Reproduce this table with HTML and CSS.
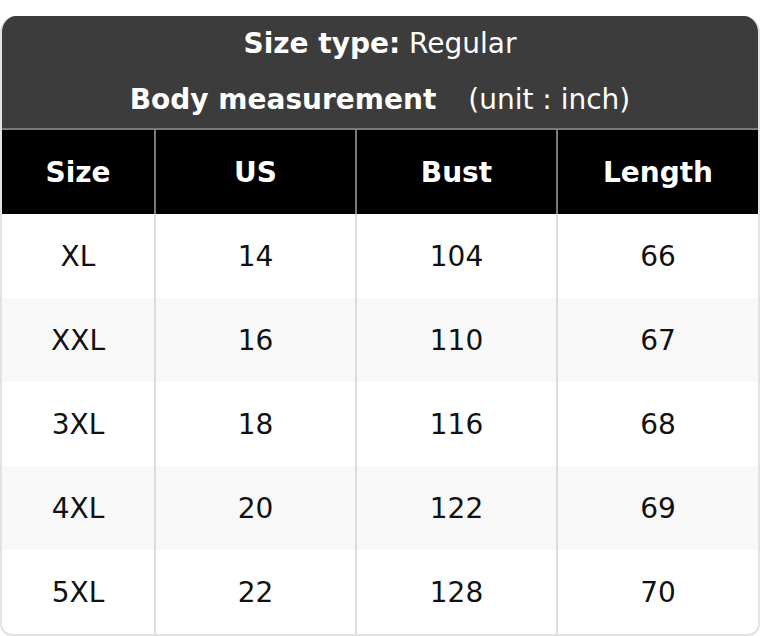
FILE: index.html
```html
<!DOCTYPE html>
<html>
<head>
<meta charset="utf-8">
<link rel="stylesheet" href="styles.css">
</head>
<body>
<div class="chart">
  <div class="title">
    <div class="title-line"><b>Size type:</b> Regular</div>
    <div class="title-line"><b>Body measurement</b><span class="unit">(unit : inch)</span></div>
  </div>
  <table class="grid">
    <colgroup>
      <col class="c1"><col class="c2"><col class="c3"><col class="c4">
    </colgroup>
    <thead>
      <tr><th>Size</th><th>US</th><th>Bust</th><th>Length</th></tr>
    </thead>
    <tbody>
      <tr><td>XL</td><td>14</td><td>104</td><td>66</td></tr>
      <tr><td>XXL</td><td>16</td><td>110</td><td>67</td></tr>
      <tr><td>3XL</td><td>18</td><td>116</td><td>68</td></tr>
      <tr><td>4XL</td><td>20</td><td>122</td><td>69</td></tr>
      <tr><td>5XL</td><td>22</td><td>128</td><td>70</td></tr>
    </tbody>
  </table>
</div>
</body>
</html>
```
FILE: styles.css
```css
html, body {
  margin: 0;
  padding: 0;
  background: #ffffff;
}
body {
  padding-top: 16px;
  font-family: "DejaVu Sans", sans-serif;
}
.chart {
  width: 760px;
  box-sizing: border-box;
  border: 2px solid #e2e2e2;
  border-top: none;
  border-radius: 16px 16px 12px 12px;
  overflow: hidden;
  background: #fff;
}
.title {
  background: #3c3c3c;
  color: #fff;
  font-size: 28px;
  text-align: center;
  padding: 0;
}
.title-line {
  height: 56px;
  line-height: 56px;
}
.title-line b {
  font-weight: bold;
}
.unit {
  margin-left: 32px;
}
.grid {
  width: 100%;
  border-collapse: collapse;
  table-layout: fixed;
  font-size: 28px;
}
.c1 { width: 153px; }
.c2 { width: 201px; }
.c3 { width: 201px; }
.grid th {
  background: #000;
  color: #fff;
  font-weight: bold;
  height: 84px;
  padding: 0;
  border-top: 2px solid #7a7a7a;
  border-left: 2px solid #7a7a7a;
}
.grid td {
  height: 84px;
  padding: 0;
  text-align: center;
  color: #111;
  border-left: 2px solid #dcdcdc;
}
.grid th:first-child, .grid td:first-child {
  border-left: none;
}
.grid tbody tr:nth-child(even) td {
  background: #f8f8f8;
}
```
